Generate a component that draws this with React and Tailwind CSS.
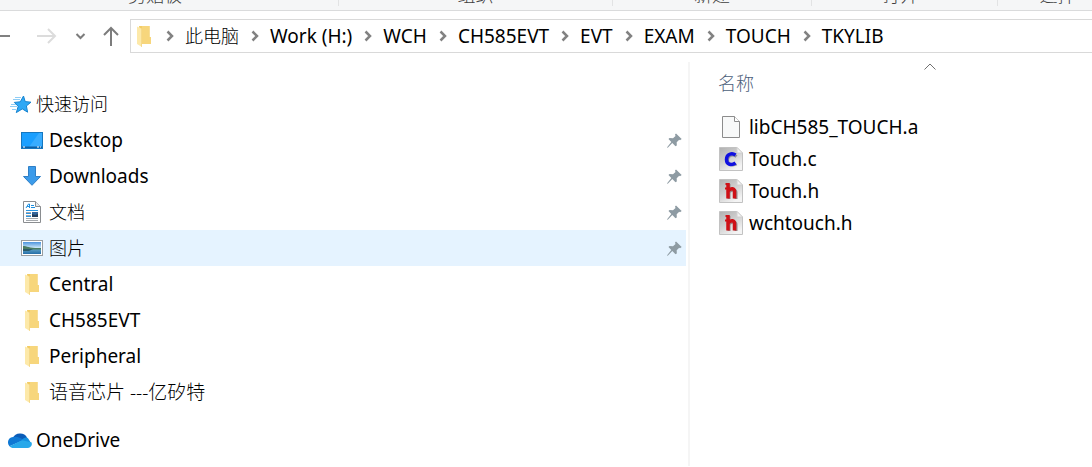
import React, { useState } from 'react';

const ribbonGroups = [
  { label: '剪贴板', className: 'w-[339px] pr-7' },
  { label: '组织', className: 'w-[274px]' },
  { label: '新建', className: 'w-[199px]' },
  { label: '打开', className: 'w-[186px] pr-2' },
  { label: '选择', className: 'w-[120px]' },
];

const crumbs = ['此电脑', 'Work (H:)', 'WCH', 'CH585EVT', 'EVT', 'EXAM', 'TOUCH', 'TKYLIB'];

const quickAccess = [
  { name: 'Desktop', icon: DesktopIcon, pinned: true },
  { name: 'Downloads', icon: DownloadIcon, pinned: true },
  { name: '文档', icon: DocumentIcon, pinned: true },
  { name: '图片', icon: PictureIcon, pinned: true },
  { name: 'Central', icon: FolderIcon },
  { name: 'CH585EVT', icon: FolderIcon },
  { name: 'Peripheral', icon: FolderIcon },
  { name: '语音芯片 ---亿矽特', icon: FolderIcon },
];

const files = [
  { name: 'libCH585_TOUCH.a', icon: BlankFileIcon },
  { name: 'Touch.c', icon: CFileIcon },
  { name: 'Touch.h', icon: HFileIcon },
  { name: 'wchtouch.h', icon: HFileIcon },
];

// Chinese names are set lighter, and a touch smaller when they hold no Latin
function labelClass(text) {
  if (/^[\u4e00-\u9fff]+$/.test(text)) return 'text-[18px] font-light';
  if (/[\u4e00-\u9fff]/.test(text)) return 'font-light';
  return '';
}

function FolderIcon() {
  return (
    <svg width="14" height="21" viewBox="0 0 14 21" className="shrink-0">
      <path d="M2 0H12.500V11H14V18H4Z" fill="#f3cd66" />
      <path d="M5 0H12.500V11H14V18H5Z" fill="#f7d67c" />
      <path d="M0 0.500L5 3V21L0 18Z" fill="#fde9a9" />
      <path d="M4 2.500L5 3V21L4 20.400Z" fill="#f5d98a" />
    </svg>
  );
}

function StarIcon() {
  return (
    <svg width="22" height="19" viewBox="0 0 22 19" className="shrink-0">
      <path
        d="M13.500 1L15.200 6.600L21 7.200L16.400 10.900L17.600 17.200L12.300 13.900L6.300 17.600L8.200 11.300L4.300 7.400L10.300 6.800Z"
        fill="#2fa8f5"
        stroke="#1684d0"
        strokeWidth="1"
        strokeLinejoin="round"
      />
      <path d="M5 2.500H11M3 4.500H10M1 9.500H6M0 11.500H7M2 14.500H6" stroke="#8fcdf5" strokeWidth="1" />
    </svg>
  );
}

function DesktopIcon() {
  return (
    <svg width="22" height="17" viewBox="0 0 22 17" className="shrink-0">
      <rect x="0.500" y="0.500" width="21" height="16" fill="#1a9fff" stroke="#1577c0" />
      <path d="M8 15L18 1H21V15Z" fill="#38acff" />
      <path d="M1 14.500H21V16H1Z" fill="#0d5fa5" />
      <path d="M2 15H4M16 15H18M19 15H20" stroke="#fff" strokeWidth="1" />
    </svg>
  );
}

function DownloadIcon() {
  return (
    <svg width="20" height="20" viewBox="0 0 20 20" className="mx-px shrink-0">
      <path d="M6.500 0.500H13.500V10.500H18.500L10 19.300L1.500 10.500H6.500Z" fill="#3b9bea" stroke="#2f7fc6" />
    </svg>
  );
}

function DocumentIcon() {
  return (
    <svg width="18" height="22" viewBox="0 0 18 22" className="mx-0.5 shrink-0">
      <path d="M0.500 0.500H12.500L17.500 5.500V21.500H0.500Z" fill="#fff" stroke="#8a8d90" />
      <path d="M12.500 0.500V5.500H17.500" fill="#e6e8ea" stroke="#8a8d90" />
      <path d="M3 7L5.500 3H6.500V7M4 5.500H7M8 4.500H11M8 6.500H12" fill="none" stroke="#1d8fe0" />
      <path d="M3 9.500H15M3 12.500H8M3 15.500H8" stroke="#2b97e3" />
      <path d="M3 11.500H8M3 14.500H8M3 17.500H15M3 19.500H15" stroke="#a5a9ad" />
      <rect x="9" y="11" width="6" height="5" fill="#35679c" />
      <path d="M9 13L12 14L15 13V16H9Z" fill="#22405f" />
    </svg>
  );
}

function PictureIcon() {
  return (
    <svg width="22" height="16" viewBox="0 0 22 16" className="shrink-0">
      <defs>
        <linearGradient id="sky" x1="0" y1="0" x2="0" y2="1">
          <stop offset="0" stopColor="#4d94dd" />
          <stop offset="0.500" stopColor="#cfe9f8" />
          <stop offset="0.600" stopColor="#5d9fc4" />
          <stop offset="1" stopColor="#256ea8" />
        </linearGradient>
      </defs>
      <rect x="0.500" y="0.500" width="21" height="15" fill="#fff" stroke="#9a9da0" />
      <rect x="2" y="2" width="18" height="12" fill="url(#sky)" />
      <path d="M2 6C6 6 9 8.500 20 8V9.500H2Z" fill="#4b7c62" />
      <path d="M2 9H12L8 11H2Z" fill="#2b5a68" />
    </svg>
  );
}

function CloudIcon() {
  return (
    <svg width="24" height="16" viewBox="0 0 24 16" className="shrink-0">
      <path d="M5 6A7.500 6.500 0 0 1 19 5.500L14 10Z" fill="#0a5cb8" />
      <path d="M5 5C0 5.500-1.500 11 1.500 14.200L16 8C12.500 5.500 8.500 4 5 5Z" fill="#0f78d4" />
      <path d="M13.500 8.200C16 4.500 20 5 20.500 7L23 11L17 11Z" fill="#1490df" />
      <path d="M1.500 14.200L14 8.300L23.400 10.200C25 13 22.500 16 19.500 16H5.500C3.800 16 2.400 15.300 1.500 14.200Z" fill="#28a8ea" />
    </svg>
  );
}

function PinIcon() {
  return (
    <svg width="15" height="15" viewBox="0 0 15 15" className="shrink-0" fill="#8e9ba3">
      <path d="M9 0.500L14.700 6L13 7.200L12.200 6.800L9.700 9.300L9.800 12.500L8.500 13.300L5.300 10L1 14.500L0 15L0.500 13.700L4.300 9L1.500 6L2.500 5L6 5.200L8.500 3L8 1.500Z" />
    </svg>
  );
}

function BlankFileIcon() {
  return (
    <svg width="18" height="22" viewBox="0 0 18 22" className="mx-[3px] shrink-0">
      <path d="M0.500 0.500H12.500L17.500 5.500V21.500H0.500Z" fill="#f8f9f9" stroke="#8c8c8c" />
      <path d="M12.500 0.500V5.500H17.500" fill="#fff" stroke="#8c8c8c" />
    </svg>
  );
}

function SourceSheet({ id, children }) {
  return (
    <svg width="24" height="24" viewBox="0 0 24 24" className="shrink-0">
      <defs>
        <linearGradient id={id} x1="0" y1="0" x2="0.600" y2="1">
          <stop offset="0" stopColor="#b0b0b0" />
          <stop offset="0.500" stopColor="#cecece" />
          <stop offset="1" stopColor="#f4f4f4" />
        </linearGradient>
      </defs>
      <path d="M0.500 0.500H18L23.500 6V23.500H0.500Z" fill={`url(#${id})`} stroke="#c2c2c2" />
      <path d="M18 0.500V6H23.500Z" fill="#f2f2f2" stroke="#d0d0d0" />
      {children}
    </svg>
  );
}

function CFileIcon() {
  return (
    <SourceSheet id="sheet-c">
      <path d="M17.500 9.500C14 6.500 8.500 8 8.500 13C8.500 18 13.500 19 17.500 17" fill="none" stroke="#8c8c9c" strokeWidth="3" />
      <path d="M16.500 8C13 5.500 7.500 7 7.500 12.500C7.500 18 12.500 18.500 16.500 16" fill="none" stroke="#1010e0" strokeWidth="3.500" />
    </SourceSheet>
  );
}

function HFileIcon() {
  return (
    <SourceSheet id="sheet-h">
      <path d="M10 5V20M10 13C13 10 17 10.500 17 13.500V20" fill="none" stroke="#98888a" strokeWidth="3" />
      <path d="M9 4V19.500M9 12C12 8.500 15.500 9.500 15.500 12.500V19.500" fill="none" stroke="#cf1016" strokeWidth="3.500" />
      <path d="M6 9.500H11M6.500 5H9" stroke="#cf1016" strokeWidth="2" />
    </SourceSheet>
  );
}

function Chevron() {
  return (
    <svg width="8" height="12" viewBox="0 0 8 12" className="shrink-0">
      <path d="M1.500 1.500L6 6L1.500 10.500" fill="none" stroke="#828282" strokeWidth="2.500" />
    </svg>
  );
}

function Ribbon() {
  return (
    <div className="flex h-[11px] overflow-hidden border-b border-[#dadbdc] bg-[#f5f6f7] text-[18px] font-light text-[#404040]">
      {ribbonGroups.map((group) => (
        <div key={group.label} className={`flex h-1.5 shrink-0 items-end justify-center border-r border-[#e2e3e4] pb-0.5 ${group.className}`}>
          <span className="leading-[18px]">{group.label}</span>
        </div>
      ))}
    </div>
  );
}

function AddressBar() {
  return (
    <div className="flex items-center pt-2">
      <div className="flex w-[130px] shrink-0 items-center">
        <button aria-label="Back" className="w-[10px] overflow-hidden">
          <svg width="10" height="20" viewBox="0 0 10 20">
            <path d="M0 10H10" stroke="#808080" strokeWidth="2" />
          </svg>
        </button>
        <button aria-label="Forward" className="ml-[27px]">
          <svg width="20" height="20" viewBox="0 0 20 20" fill="none" stroke="#dcdcdc" strokeWidth="2">
            <path d="M0 10H18M11 3L18 10L11 17" />
          </svg>
        </button>
        <button aria-label="Recent locations" className="ml-[18px]">
          <svg width="11" height="20" viewBox="0 0 11 20" fill="none" stroke="#7c7c7c" strokeWidth="2">
            <path d="M1.500 8L5.500 12L9.500 8" />
          </svg>
        </button>
        <button aria-label="Up" className="ml-4">
          <svg width="18" height="20" viewBox="0 0 18 20" fill="none" stroke="#7c7c7c" strokeWidth="2">
            <path d="M9 20V2M2 9L9 2L16 9" />
          </svg>
        </button>
      </div>
      <nav aria-label="Path" className="flex h-[34px] flex-1 items-center overflow-hidden border-y border-l border-[#d9d9d9] pl-1.5">
        <FolderIcon />
        <ol className="flex items-center pl-[15px]">
          {crumbs.map((crumb) => (
            <li key={crumb} className="flex items-center">
              <Chevron />
              <button className={`pr-3 pl-[11px] whitespace-nowrap ${labelClass(crumb)}`}>{crumb}</button>
            </li>
          ))}
        </ol>
      </nav>
    </div>
  );
}

function NavPane({ selected, onSelect }) {
  return (
    <nav aria-label="Folders" className="w-[63%] shrink-0 pt-6 pr-0.5 pb-2">
      <a href="#quick" className="flex h-9 items-center gap-1 pl-2.5">
        <StarIcon />
        <span className={labelClass('快速访问')}>快速访问</span>
      </a>
      <ul>
        {quickAccess.map(({ name, icon: Icon, pinned }) => (
          <li key={name}>
            <a
              href="#folder"
              onClick={() => onSelect(name)}
              className={`flex h-9 items-center gap-1.5 pr-1 pl-[21px] ${selected === name ? 'bg-[#e5f3ff]' : ''}`}
            >
              <span className="flex w-[22px] justify-center">
                <Icon />
              </span>
              <span className={`flex-1 ${labelClass(name)}`}>{name}</span>
              {pinned && <PinIcon />}
            </a>
          </li>
        ))}
      </ul>
      <a href="#onedrive" className="mt-3 flex h-9 items-center gap-1 pl-2">
        <CloudIcon />
        OneDrive
      </a>
    </nav>
  );
}

function FileList() {
  return (
    <div className="flex-1 overflow-hidden border-l-2 border-[#f5f5f5] pl-7">
      <table className="w-[424px] text-left">
        <thead>
          <tr>
            <th className="p-0 font-light">
              <button className="flex h-[49px] w-full flex-col text-left text-[18px] text-[#4c607a]">
                <svg width="12" height="7" viewBox="0 0 12 7" className="mt-px self-center">
                  <path d="M0.500 6.500L6 1L11.500 6.500" fill="none" stroke="#707070" />
                </svg>
                <span className="leading-[26px]">名称</span>
              </button>
            </th>
          </tr>
        </thead>
        <tbody>
          {files.map(({ name, icon: Icon }) => (
            <tr key={name}>
              <td className="p-0">
                <div className="flex h-8 items-center gap-1.5 pl-px">
                  <Icon />
                  {name}
                </div>
              </td>
            </tr>
          ))}
        </tbody>
      </table>
    </div>
  );
}

function App() {
  const [selected, setSelected] = useState('图片');

  return (
    <div className="overflow-hidden bg-white font-['Noto_Sans','Noto_Sans_CJK_SC',sans-serif] text-[19px] leading-6 text-black">
      <Ribbon />
      <AddressBar />
      <main className="flex pt-[9px]">
        <NavPane selected={selected} onSelect={setSelected} />
        <FileList />
      </main>
    </div>
  );
}

export default App;
